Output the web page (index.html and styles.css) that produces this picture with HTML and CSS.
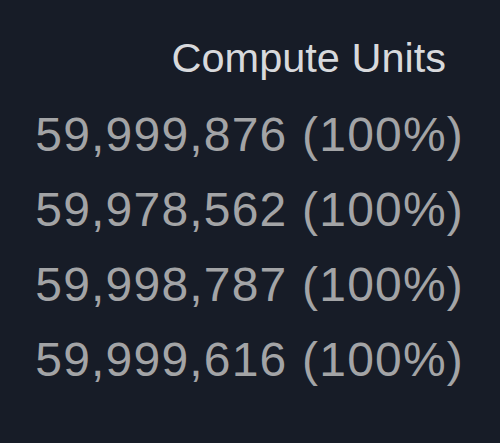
FILE: index.html
```html
<!DOCTYPE html>
<html>
<head>
<meta charset="utf-8">
<link rel="stylesheet" href="styles.css">
</head>
<body>
<div class="panel">
  <div class="col-head">Compute Units</div>
  <div class="rows">
    <div class="row">59,999,876 (100%)</div>
    <div class="row">59,978,562 (100%)</div>
    <div class="row">59,998,787 (100%)</div>
    <div class="row">59,999,616 (100%)</div>
  </div>
</div>
</body>
</html>
```
FILE: styles.css
```css
html, body {
  margin: 0;
  padding: 0;
  background: #171c27;
}
body {
  width: 500px;
  height: 443px;
  overflow: hidden;
  font-family: "Liberation Sans", Arial, sans-serif;
}
.panel {
  padding-top: 34px;
}
.col-head {
  text-align: right;
  padding-right: 54px;
  font-size: 41.5px;
  line-height: 48px;
  color: #d8d9dc;
}
.rows {
  margin-top: 15px;
  display: flex;
  flex-direction: column;
  align-items: flex-end;
  padding-right: 36px;
}
.row {
  font-size: 48px;
  line-height: 75px;
  letter-spacing: 1.2px;
  color: #a3a4a6;
}
```
